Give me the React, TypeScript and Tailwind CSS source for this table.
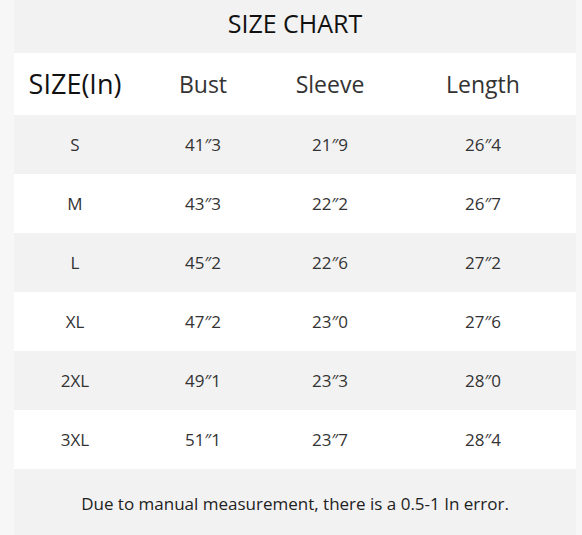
import React from "react";

const rows = [
  ["S", "41″3", "21″9", "26″4"],
  ["M", "43″3", "22″2", "26″7"],
  ["L", "45″2", "22″6", "27″2"],
  ["XL", "47″2", "23″0", "27″6"],
  ["2XL", "49″1", "23″3", "28″0"],
  ["3XL", "51″1", "23″7", "28″4"],
];

const cols = "grid grid-cols-[122px_134px_120px_186px]";

export default function App() {
  return (
    <div
      className="w-[582px] h-[535px] bg-[#f7f7f7] pl-[14px] pr-[6px] overflow-hidden"
      style={{ fontFamily: '"Open Sans", "Noto Sans", sans-serif' }}
    >
      <div className="w-[562px] bg-[#f2f2f2]">
        <div className="h-[53px] flex items-center justify-center text-[25px] text-[#111] pb-[5px]">
          SIZE CHART
        </div>
        <div className={`${cols} h-[62px] bg-white items-center text-center text-[23px] text-[#333]`}>
          <div className="text-[27px] text-[#111]">SIZE(In)</div>
          <div>Bust</div>
          <div>Sleeve</div>
          <div>Length</div>
        </div>
        {rows.map((r, i) => (
          <div
            key={r[0]}
            className={`${cols} h-[59px] items-center text-center text-[17px] text-[#333] ${
              i % 2 === 0 ? "bg-[#f2f2f2]" : "bg-white"
            }`}
          >
            {r.map((c, j) => (
              <div key={j}>{c}</div>
            ))}
          </div>
        ))}
        <div className="h-[66px] flex items-center justify-center text-[17px] text-[#222] pt-[4px]">
          Due to manual measurement, there is a 0.5-1 In error.
        </div>
      </div>
    </div>
  );
}
